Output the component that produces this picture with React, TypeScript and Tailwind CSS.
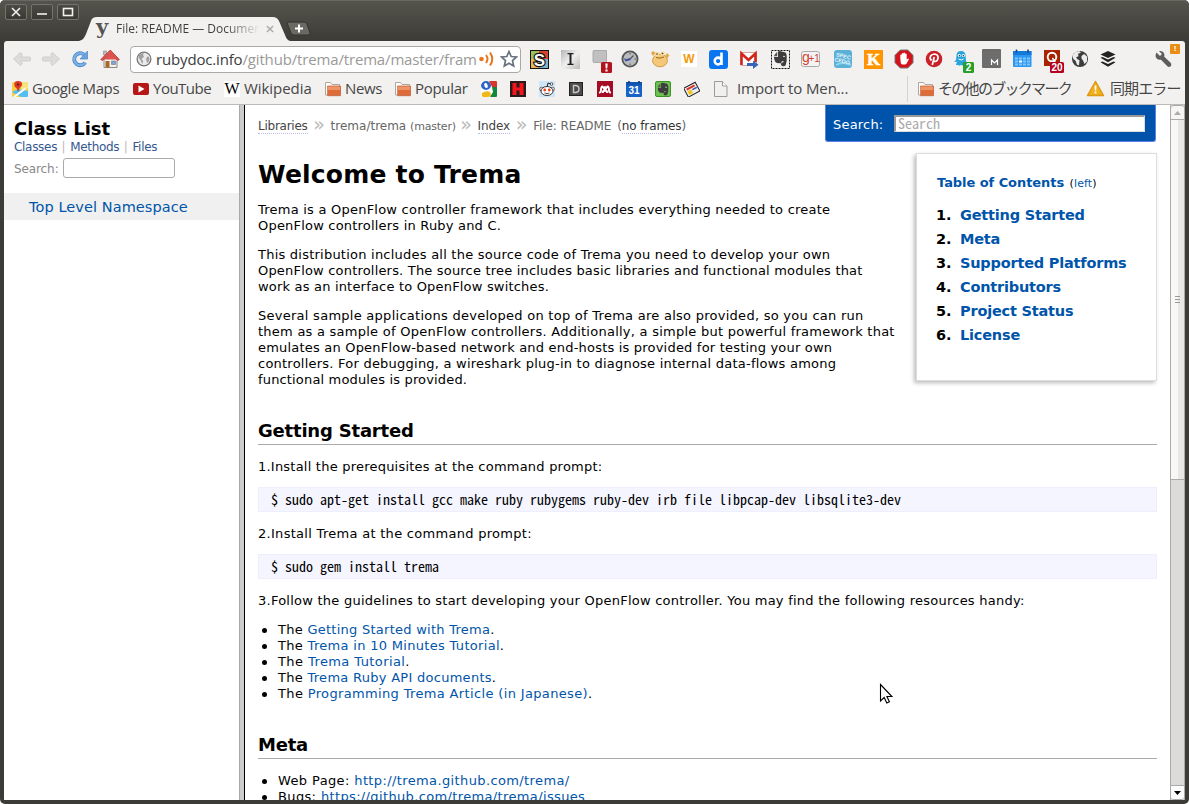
import React from "react";

const UI = "font-['Open_Sans','Noto_Sans','Noto_Sans_CJK_JP',sans-serif]";
const MONO = "font-['Noto_Sans_Mono_CJK_JP','DejaVu_Sans_Mono',monospace]";

function WinButton({ children }: { children: React.ReactNode }) {
  return (
    <div className="flex h-4 w-[22px] items-center justify-center rounded-[2px] border border-[#74736c] bg-linear-to-b from-[#4b4a44] to-[#3a3934]">
      <svg width="12" height="12" viewBox="0 0 12 12" fill="none" stroke="#f2f1ee" strokeWidth="1.6">
        {children}
      </svg>
    </div>
  );
}

function TitleBar() {
  return (
    <div className="flex h-[41px] rounded-t-[5px] border-t border-[#686760] bg-linear-to-b from-[#55544c] to-[#3c3b37] pl-[5px]">
      <div className="flex gap-1 pt-[3px]">
        <WinButton><path d="M2 2l8 8M10 2l-8 8" /></WinButton>
        <WinButton><path d="M1 8h10" /></WinButton>
        <WinButton><rect x="1.5" y="2.5" width="9" height="7" /></WinButton>
      </div>
      <div className="relative mt-4 h-6 w-[208px]">
        <svg className="absolute top-0 left-0" width="212" height="24" viewBox="0 0 212 24">
          <path d="M0 24 C4 23 5 21 7 17 L12 4 Q13 0 18 0 H194 Q198 0 200 4 L206 18 Q208 24 212 24 Z" fill="#f2f1f0" />
        </svg>
        <div className={`absolute inset-0 flex items-center pl-[17px] text-[12px] text-[#3c3c3c] ${UI}`}>
          <span className="w-[20px] pb-[5px] font-['DejaVu_Serif',serif] text-[21px] leading-5 font-bold text-[#555]">y</span>
          <span className="w-[144px] overflow-hidden bg-linear-to-r from-[#3c3c3c] from-75% to-[#f2f1f0] bg-clip-text whitespace-nowrap text-transparent">
            File: README — Documentation
          </span>
          <svg className="ml-[6px]" width="8" height="8" viewBox="0 0 9 9" stroke="#aaa9a6" strokeWidth="1.6"><path d="M1 1l7 7M8 1l-7 7" /></svg>
        </div>
      </div>
      <svg className="mt-[20px] -ml-[1px]" width="26" height="16" viewBox="0 0 26 16">
        <path d="M1 2Q1 1 3 1H18Q20 1 21 3L24 12Q25 14 22 14H8Q6 14 5 12Z" fill="#6a6963" stroke="#33322e" />
        <path d="M13 3.5v8M9 7.5h8" stroke="#fff" strokeWidth="2" />
      </svg>
    </div>
  );
}

const svgText = "font-['Liberation_Sans',sans-serif]";

function Ext({ className = "", children }: { className?: string; children: React.ReactNode }) {
  return (
    <svg className={`shrink-0 ${className}`} width="24" height="28" viewBox="0 0 24 28">
      {children}
    </svg>
  );
}

function Elephant() {
  return (
    <>
      <path d="M5.800 11.200h3.400V6.800q-1.800 1.800-3.400 4.400z" fill="#555" />
      <path d="M6 12h4V6.500q2-.8 3.500 0l3.200.7q1.700.3 2 3.800.4 5.500-1 9-.7 1.500-2.700 1.300-2.200-.2-2.100-2.300.2-1.800 2.600-1.700v-1.300q-1.200-.2-1.800.6l-.8 1.700q-4.500.2-5.700-1.500Q6 14.500 6 12z" fill="#3d3d3d" />
      <path d="M15 11.500q1.200-.8 2 .5" stroke="#ddd" fill="none" />
    </>
  );
}

function Extensions() {
  return (
    <div className="flex items-center">
      <Ext>
        <rect x="3" y="5" width="19" height="19" fill="#111" />
        <path d="M4 6h8v8H4z" fill="#9bbf5c" /><path d="M12 6h9v8h-9z" fill="#d8432e" />
        <path d="M4 14h8v9H4z" fill="#e7b653" /><path d="M12 14h9v9h-9z" fill="#7fb4cf" />
        <text x="12.500" y="20.500" textAnchor="middle" className={svgText} fontSize="17" fontWeight="bold" fill="#fff" stroke="#111" strokeWidth="2.4" paintOrder="stroke">S</text>
      </Ext>
      <Ext className="ml-[7px]">
        <defs><linearGradient id="ins" x1="0" y1="0" x2="1" y2="1"><stop stopColor="#b5b5b5" /><stop offset=".5" stopColor="#f0f0f0" /><stop offset="1" stopColor="#bbb" /></linearGradient></defs>
        <rect x="3" y="5" width="19" height="19" fill="url(#ins)" />
        <path d="M9.500 8h6v1.200h-2v9.600h2V20h-6v-1.200h2V9.200h-2z" fill="#222" />
      </Ext>
      <Ext className="ml-[7px]">
        <path d="M5 5.500h12.500v12h-1v3l-4-3H5q-1 0-1-1v-10q0-1 1-1z" fill="#c0c0c0" stroke="#a0a0a0" strokeWidth=".8" />
        <rect x="12" y="17" width="11" height="11" rx="1.500" fill="#b3121f" />
        <path d="M16.3 18.500h2.400l-.4 5h-1.600zM16.400 24.500h2.200v2h-2.200z" fill="#fff" />
      </Ext>
      <Ext className="ml-[5px]">
        <circle cx="12" cy="14" r="7.600" fill="#b9bcbe" stroke="#555" strokeWidth="1.800" />
        <path d="M12 8v1.500M12 18.500v1.500M6 14h1.500M16.500 14h1.500" stroke="#555" />
        <path d="M12 14l3.500-3.500" stroke="#555" strokeWidth="1.200" /><path d="M12.500 14l-5.500 1.500" stroke="#3c51a3" strokeWidth="2" />
      </Ext>
      <Ext className="ml-[6px]">
        <ellipse cx="12" cy="15.500" rx="7.500" ry="6.300" fill="#f3c878" stroke="#c98f33" strokeWidth=".8" />
        <path d="M3 8l2-2 3 2-3 3zM17 11l2-3 2.500 2.500-2.500 3z" fill="#e5a94b" />
        <circle cx="9" cy="9" r="2.200" fill="#f8dca0" /><circle cx="14.500" cy="8.500" r="2.200" fill="#f8dca0" />
        <circle cx="9" cy="9" r=".8" fill="#432" /><circle cx="14.500" cy="8.500" r=".8" fill="#432" />
        <path d="M8 12.500q4 1.500 8-.5" stroke="#a06a20" fill="none" />
      </Ext>
      <Ext className="ml-[5px]">
        <rect x="4" y="6" width="16" height="16" fill="#fff" />
        <text x="12" y="18" textAnchor="middle" className={svgText} fontSize="12" fontWeight="bold" fill="#f39a0b">W</text>
      </Ext>
      <Ext className="ml-[5px]">
        <rect x="3" y="5" width="19" height="19" rx="3" fill="#0b74ef" />
        <path d="M15.500 7.500v12.500M15.500 16a3.400 3.400 0 1 1-6.800 0a3.400 3.400 0 1 1 6.800 0" stroke="#fff" strokeWidth="2.600" fill="none" />
      </Ext>
      <Ext className="ml-[7px]">
        <rect x="3.500" y="7.500" width="16" height="13" rx="1" fill="#fff" stroke="#d3a5a2" />
        <path d="M4.500 20V8.500l7 6.500 7-6.500V17" fill="none" stroke="#d2261b" strokeWidth="2.600" />
        <path d="M10 18h6v-2.500l5.500 4.300-5.500 4.200v-3h-6z" fill="#3864b8" />
      </Ext>
      <Ext className="ml-[7px]">
        <rect x="3.500" y="5.500" width="18" height="18" fill="none" stroke="#111" strokeDasharray="2 1" />
        <Elephant />
      </Ext>
      <Ext className="ml-[7px]">
        <rect x="2.500" y="6.500" width="18" height="15" rx="2" fill="#f3f3f3" stroke="#aaa" />
        <text x="3" y="17" className={svgText} fontSize="14" fill="#d4402f">g</text>
        <text x="9.500" y="17" className={svgText} fontSize="10" fill="#d4402f">+1</text>
      </Ext>
      <Ext className="ml-[8px]">
        <rect x="3" y="5" width="18" height="18" rx="3" fill="#5ab0d6" />
        <path d="M5 20Q12 16 20 20" stroke="#8ed4ee" strokeWidth="2" fill="none" />
        <g transform="rotate(14 12 13)">
          <text x="12" y="13" textAnchor="middle" className={svgText} fontSize="5.500" fontWeight="bold" fill="#e4f5fb">SPEC</text>
          <text x="12" y="18" textAnchor="middle" className={svgText} fontSize="5.500" fontWeight="bold" fill="#e4f5fb">CFDO</text>
        </g>
      </Ext>
      <Ext className="ml-[6px]">
        <rect x="3" y="5" width="19" height="19" fill="#ff9500" />
        <text x="12.500" y="20" textAnchor="middle" className="font-['Liberation_Serif',serif]" fontSize="17" fontWeight="bold" fill="#fff" stroke="#fff" strokeWidth=".5">K</text>
      </Ext>
      <Ext className="ml-[7px]">
        <path d="M8.300 5h7.400l5.300 5.300v7.400L15.700 23H8.300L3 17.700v-7.400z" fill="#d3121a" stroke="#777" />
        <path d="M8.300 13.500V9.800q.8-.8 1.500 0v2.700V8.500q.8-.8 1.600 0v3.700V8q.9-.8 1.700 0v4.500V9q.8-.8 1.600 0v5.500l1.500-1q1 0 .6.900l-2.300 4.300q-.5.800-1.500.8h-2.200q-1.500 0-2-1.500z" fill="#fff" />
      </Ext>
      <Ext className="ml-[6px]">
        <circle cx="12" cy="14" r="8.300" fill="#cb2027" />
        <path d="M9.500 15.500q-2-1.800-1-4.300 1.200-2.200 4-2.200 3.500.3 3.600 3.300-.2 3.800-2.800 4.200-1.300 0-1.600-1M12.200 12l-1.900 8" stroke="#fff" strokeWidth="1.700" fill="none" />
      </Ext>
      <Ext className="ml-[4px]">
        <path d="M4 17l2-2 .5-5q.5-4 4.500-4t4.500 4l.5 6 1.500 4q-2 1-3.500-.5-1.500 2-3 .2-1.800 1.800-3 0-1 .5-2 0l1-3z" fill="#29a3dc" />
        <circle cx="9.300" cy="10.500" r="1.600" fill="#fff" /><circle cx="13.300" cy="10.500" r="1.600" fill="#fff" />
        <circle cx="9.500" cy="10.800" r=".8" fill="#135" /><circle cx="13.300" cy="10.800" r=".8" fill="#135" />
        <path d="M8.500 14q3 2 5 0" stroke="#fff" fill="none" />
        <rect x="13" y="17" width="11" height="11" rx="1.500" fill="#279f2a" />
        <text x="18.500" y="26" textAnchor="middle" className={svgText} fontSize="10" fontWeight="bold" fill="#fff">2</text>
      </Ext>
      <Ext className="ml-[6px]">
        <rect x="2" y="4" width="19" height="19" rx="1" fill="#6b6b6b" />
        <path d="M2 8h19M2 11h19M2 14h19M2 17h19M2 20h19" stroke="#777" strokeWidth=".7" />
        <path d="M11.500 20v-5l3 3 3-3v5" stroke="#fff" strokeWidth="1.200" fill="none" />
      </Ext>
      <Ext className="ml-[6px]">
        <rect x="3" y="6" width="18.500" height="16" rx="1" fill="#2b97f0" />
        <path d="M3 6h18.500v4H3z" fill="#1479d8" />
        <path d="M6.500 4.500v3M18 4.500v3" stroke="#164a87" strokeWidth="1.600" />
        <path d="M5 12.500h3v2H5zM9 12.500h3v2H9zM13 12.500h3v2h-3zM17 12.500h3v2h-3zM5 15.500h3v2H5zM13 15.500h3v2h-3zM17 15.500h3v2h-3zM5 18.500h3v2H5zM9 18.500h3v2H9zM13 18.500h3v2h-3zM17 18.500h3v2h-3z" fill="#7fc4fb" />
        <path d="M9 15.500h3v2H9z" fill="#fff" />
      </Ext>
      <Ext className="ml-[6px]">
        <rect x="4" y="5" width="16" height="16" fill="#a82400" />
        <circle cx="12" cy="12" r="4.300" stroke="#fff" strokeWidth="1.900" fill="none" />
        <path d="M12 13.500q2 0 3 4" stroke="#fff" strokeWidth="1.600" fill="none" />
        <rect x="10" y="17" width="14" height="11" rx="1.500" fill="#b6001f" />
        <text x="17" y="26" textAnchor="middle" className={svgText} fontSize="10" fontWeight="bold" fill="#fff">20</text>
      </Ext>
      <Ext className="ml-[4px]">
        <circle cx="12" cy="14" r="8" fill="#3c3c3c" />
        <path d="M4.500 11q2-5 7-4.700l1.500 1.500-3 1 .5 2.500-2.500 1 1.500 2 2 1-.5 5-2-.5-1.500-4Q4.500 14 4.500 11zM13.500 11l2.500-2 3 2.500v5l-2.500 2.500-1.500-3.500-1.500-2z" fill="#ececec" />
      </Ext>
      <Ext className="ml-[4px]">
        <path d="M12 6l7.500 3.500L12 13 4.500 9.500z" fill="#222" />
        <path d="M4.500 12.800l2-.8L12 14.600l5.500-2.600 2 .8L12 17.200zM4.500 17.200l2-.8L12 19l5.500-2.600 2 .8L12 21.700z" fill="#222" />
      </Ext>
      <div className="relative ml-[31px] h-7 w-7">
        <svg className="absolute top-[5px] left-[3px]" width="18" height="18" viewBox="0 0 18 18">
          <path d="M2.500 2.600L6 6l2-2L5 1.200Q9 .5 10.300 4q.3 1.500-.2 2.500l6.500 6.300q1.500 2.200-.2 3.700-1.800 1-3.300-.5L7 9.700Q3.500 10.500 1.800 7.300 1.200 4.500 2.500 2.600z" fill="#5d5d5b" />
        </svg>
        <div className={`absolute top-[-1px] left-[19px] flex h-[10px] w-[10px] items-center justify-center rounded-[1px] bg-[#ea8e14] text-[8px] font-bold text-white ${svgText}`}>!</div>
      </div>
    </div>
  );
}

function Arrow({ flip = false }: { flip?: boolean }) {
  return (
    <svg width="20" height="18" viewBox="0 0 20 18" className={flip ? "-scale-x-100" : ""}>
      <path d="M1.500 9L8.500 2.500L10.500 4.500L8.500 7h9q1 0 1 1v2q0 1-1 1h-9l2 2.500-2 2z" fill="#dddcda" stroke="#cfcecb" strokeLinejoin="round" />
    </svg>
  );
}

function Toolbar() {
  return (
    <div className="flex h-9 items-center bg-[#f2f1f0]">
      <div className="flex w-[126px] items-center pl-2">
        <Arrow />
        <span className="w-[9px]" />
        <Arrow flip />
        <svg className="ml-[10px]" width="18" height="18" viewBox="0 0 18 18">
          <path d="M14.200 12.500A6 6 0 1 1 13 4.600" fill="none" stroke="#4b86c6" strokeWidth="3.800" />
          <path d="M14.200 12.500A6 6 0 1 1 13 4.600" fill="none" stroke="#7db2e6" strokeWidth="2.200" />
          <path d="M16.500 1v8H9z" fill="#6ba4dd" stroke="#4b86c6" strokeWidth=".7" />
        </svg>
        <svg className="ml-[11px]" width="20" height="20" viewBox="0 0 20 20">
          <path d="M4 9h13v9.500H4z" fill="#f4f1ea" stroke="#8f8b84" />
          <path d="M3.500 2h3v4h-3z" fill="#bbb" stroke="#888" strokeWidth=".6" />
          <path d="M.8 10.500L10.300 1l9 9.500-1.500 1L10.300 5l-8 6.500z" fill="#dd5452" stroke="#b3302f" strokeWidth=".8" />
          <path d="M10.300 4.500l6.500 6H4z" fill="#dd5452" />
          <path d="M5.500 12h4v6.500h-4z" fill="#a5672a" /><path d="M11.500 12h4v3.500h-4z" fill="#7da7d8" stroke="#667" strokeWidth=".5" />
        </svg>
      </div>
      <div className="flex h-[27px] w-[391px] items-center rounded-[4px] border border-[#aaa8a5] bg-white pl-[5px]">
        <svg width="16" height="16" viewBox="0 0 16 16">
          <circle cx="8" cy="8" r="6.900" fill="#e9e9e9" stroke="#777" strokeWidth="1.300" />
          <path d="M3 4Q5.500 1.800 8 2.200L7 4l1 1.500L5.500 8l1.500 2-.5 3Q5 11 4.500 9L2.500 7zM10 7.500l2-2.500 1.500 2.500-.5 3-2 1.500z" fill="#a0a0a0" />
        </svg>
        <span className={`ml-[4px] w-[321px] text-[15px] tracking-[-0.16px] whitespace-nowrap text-[#3c3c3c] ${UI}`}>
          rubydoc.info<span className="text-[#9a9997]">/github/trema/trema/master/fram</span>
        </span>
        <svg className="ml-[2px]" width="17" height="18" viewBox="0 0 17 18" fill="none" stroke="#e8761c" strokeWidth="2">
          <circle cx="2.500" cy="9" r="2.300" fill="#e8761c" stroke="none" />
          <path d="M7 5q3 4 0 8M11 2.500q4.500 6.500 0 13" />
        </svg>
        <svg className="ml-[4px]" width="18" height="18" viewBox="0 0 18 18">
          <path d="M9 1.500l2.200 5 5.300.5-4 3.600 1.200 5.400L9 13.200 4.300 16l1.200-5.400-4-3.600 5.300-.5z" fill="#fff" stroke="#69727f" strokeWidth="1.700" />
        </svg>
      </div>
      <div className="ml-[6px]"><Extensions /></div>
    </div>
  );
}

function Folder() {
  return (
    <svg width="16" height="16" viewBox="0 0 16 16">
      <path d="M.5 14V1.500h5l1.500 2h7.500V14z" fill="#fff" stroke="#b0a69d" />
      <path d="M3 5h12.500v9.500H3z" fill="#dd6c39" /><path d="M3 5h12.500v4H3z" fill="#ee9468" />
      <path d="M2.500 5h13v9.700h-13z" fill="none" stroke="#c0562a" strokeWidth=".7" />
    </svg>
  );
}

function Bookmarks() {
  return (
    <div className={`flex h-[28px] items-center border-b border-[#bcbab7] bg-[#f2f1f0] pb-[4px] text-[15px] whitespace-nowrap text-[#464646] ${UI}`}>
      <svg className="ml-2" width="16" height="16" viewBox="0 0 16 16">
        <rect x="0" y="1" width="16" height="15" rx="1.500" fill="#f8cf3f" />
        <path d="M9 1h6q1 0 1 1v5L9 9z" fill="#f5e37c" /><path d="M0 11l6-3 10 2v4.500q0 1.500-1 1.500H9z" fill="#54bdf2" />
        <path d="M2 16L14 7" stroke="#fff" strokeWidth="2" /><path d="M6 11Q5 7 2.600 5.500 1 0 6 0t4 4.500Q7 7 6 11z" fill="#dd3b2a" /><circle cx="6" cy="3.500" r="1.200" fill="#721" />
      </svg>
      <span className="ml-1 w-[88px] tracking-[-0.38px]">Google Maps</span>
      <svg className="ml-[13px]" width="16" height="12" viewBox="0 0 16 12"><rect width="16" height="12" rx="2" fill="#b81616" /><path d="M5.500 2.500v7l6-3.500z" fill="#fff" /></svg>
      <span className="ml-1 w-[60px] tracking-[-0.5px]">YouTube</span>
      <span className="ml-[11px] flex h-4 w-4 items-center justify-center bg-white font-['Liberation_Serif',serif] text-[16px] text-black">W</span>
      <span className="ml-[4px] w-[69px] tracking-[-0.05px]">Wikipedia</span>
      <span className="ml-[12px]"><Folder /></span>
      <span className="ml-1 w-[37px] tracking-[-0.4px]">News</span>
      <span className="ml-[13px]"><Folder /></span>
      <span className="ml-1 w-[53px] tracking-[-0.3px]">Popular</span>
      <div className="ml-[13px] flex gap-[13px]">
        <svg width="16" height="16" viewBox="0 0 16 16">
          <rect width="16" height="16" fill="#fff" />
          <path d="M8 0h7q1 0 1 1v5H11z" fill="#d8382b" /><path d="M11 6h5v9q0 1-1 1H9l3-5z" fill="#0f8a3c" />
          <ellipse cx="5" cy="4.500" rx="5" ry="4.400" fill="#2f63c8" /><path d="M1 12q4-3 8-1 3 5-3 5H2q-2-1-1-4z" fill="#f0b81c" />
          <ellipse cx="5" cy="4.500" rx="1.700" ry="2.600" fill="#fff" transform="rotate(-20 5 4.500)" />
        </svg>
        <svg width="16" height="16" viewBox="0 0 16 16"><rect width="16" height="16" fill="#2b1a1a" /><path d="M2.500 2h4v4.500h3V2h4v12h-4V9.500h-3V14h-4z" fill="#f5141c" /></svg>
        <svg width="16" height="16" viewBox="0 0 16 16">
          <rect width="16" height="16" fill="#cfe5f8" /><path d="M8 6l1-4 3 1" stroke="#222" fill="none" /><circle cx="12.500" cy="3" r="1.300" fill="#fff" stroke="#222" strokeWidth=".7" />
          <circle cx="2.500" cy="8" r="1.800" fill="#fff" stroke="#333" strokeWidth=".7" /><circle cx="13.500" cy="8" r="1.800" fill="#fff" stroke="#333" strokeWidth=".7" />
          <ellipse cx="8" cy="10" rx="6" ry="4.500" fill="#fff" stroke="#222" strokeWidth=".9" /><circle cx="5.700" cy="9" r="1.400" fill="#f6401a" /><circle cx="10.300" cy="9" r="1.400" fill="#f6401a" /><path d="M5.500 12q2.500 1.300 5 0" stroke="#222" fill="none" strokeWidth=".8" />
        </svg>
        <svg width="16" height="16" viewBox="0 0 16 16"><rect x="1.500" y="1.500" width="13" height="13" fill="#4b4b4b" stroke="#222" /><path d="M5.500 4.500H8q3 .3 3 3.500t-3 3.500H5.500z" fill="none" stroke="#c8c8c8" strokeWidth="1.400" /></svg>
        <svg width="16" height="16" viewBox="0 0 16 16"><rect width="16" height="16" fill="#a50b24" /><circle cx="8" cy="6.500" r="1.500" fill="#fff" /><path d="M2 11.500q2 .2 2-2.200Q4 5.500 5.500 5.500L8 9l2.500-3.500Q12 5.500 12 9.300q0 2.400 2 2.200M5.800 12q0-2.500 2.200-2.500t2.200 2.500" stroke="#fff" strokeWidth="1.900" fill="none" /></svg>
        <svg width="16" height="16" viewBox="0 0 16 16"><rect y="1" width="16" height="15" rx="1" fill="#1762c6" /><path d="M0 1h16v3.500H0z" fill="#1255b0" /><path d="M3 0v2M13 0v2" stroke="#06306b" strokeWidth="1.500" /><text x="8" y="13" textAnchor="middle" className={svgText} fontSize="10" fontWeight="bold" fill="#fff">31</text></svg>
        <svg width="16" height="16" viewBox="0 0 16 16">
          <rect x=".5" y=".5" width="15" height="15" rx="1.500" fill="#6cc04f" stroke="#3c9227" />
          <g transform="translate(-2.200 -3.300) scale(.83)"><Elephant /></g>
        </svg>
        <svg width="16" height="16" viewBox="0 0 16 16"><g transform="rotate(-28 8 8)"><rect x="1" y="3.500" width="13" height="10" fill="#eee" stroke="#222" /><path d="M3 5h9v2H3z" fill="#de2f22" /><path d="M3 8h4v4H3z" fill="#f7c21c" /><path d="M8 8h5v1.500H8z" fill="#364fae" /></g></svg>
        <svg width="16" height="16" viewBox="0 0 16 16"><path d="M1.500.5h8l4.500 4.500v10.500H1.500z" fill="#f0f0ef" stroke="#9b9b9b" /><path d="M9.500.5V5H14" fill="#fff" stroke="#9b9b9b" /></svg>
      </div>
      <span className="ml-2 w-[112px] tracking-[-0.1px]">Import to Men...</span>
      <span className="ml-[58px] h-[26px] w-px bg-[#d5d3d0]" />
      <span className="ml-[10px]"><Folder /></span>
      <span className="ml-[4px] w-[135px] tracking-[-1.7px]">その他のブックマーク</span>
      <svg className="ml-[13px]" width="19" height="17" viewBox="0 0 19 17"><path d="M9.500 1.500l8 14h-16z" fill="#f3b01c" stroke="#dc9a10" strokeWidth="1.500" strokeLinejoin="round" /><path d="M8.500 5.500h2l-.3 5H8.800zM8.600 11.500h1.800v2H8.600z" fill="#fff" /></svg>
      <span className="ml-[5px] tracking-[-0.9px]">同期エラー</span>
    </div>
  );
}

function Sidebar() {
  return (
    <div className="w-[235px] shrink-0 bg-white">
      <div className="pt-[13px] pl-[10px]">
        <div className="h-[21px] text-[18px] leading-[21px] font-bold">Class List</div>
        <div className="flex h-4 text-[12px] leading-4 text-[#35578f]">
          <span className="tracking-[-0.3px]">Classes</span>
          <span className="mx-[4.500px] text-[#bbb]">|</span>
          <span className="tracking-[-0.3px]">Methods</span>
          <span className="mx-[4.500px] text-[#bbb]">|</span>
          <span className="tracking-[-0.3px]">Files</span>
        </div>
        <div className="mt-[3px] flex h-5 items-center text-[12px] text-[#888]">
          <span className="w-[49px] pt-px tracking-[-0.1px]">Search:</span>
          <span className="h-5 w-[112px] rounded-[3px] border border-[#aaa] bg-white" />
        </div>
      </div>
      <div className="mt-[15px] h-[27px] bg-[#f0f0f0] pl-[25px] text-[14.500px] leading-[28px] tracking-[0.08px] text-[#0055a8]">Top Level Namespace</div>
    </div>
  );
}

const link = "text-[#0055aa]";

function H2({ children }: { children: React.ReactNode }) {
  return <h2 className="mt-[31px] h-[26px] border-b border-[#aaa] text-[18px] leading-[23px] font-bold tracking-[-0.2px]">{children}</h2>;
}

function Code({ children }: { children: React.ReactNode }) {
  return (
    <pre className={`my-3 h-[25px] border border-[#eeeeff] bg-[#f5f5ff] pl-3 text-[14px] leading-[22px] ${MONO}`}>
      {children}
    </pre>
  );
}

type Row = { text: string; track: string };

function Lines({ rows }: { rows: Row[] }) {
  return (
    <p className="mb-[13px] whitespace-nowrap">
      {rows.map((r) => (
        <span key={r.text} className={`block ${r.track}`}>{r.text}</span>
      ))}
    </p>
  );
}

const intro: Row[][] = [
  [
    { text: "Trema is a OpenFlow controller framework that includes everything needed to create", track: "tracking-[0.23px]" },
    { text: "OpenFlow controllers in Ruby and C.", track: "tracking-[0.2px]" },
  ],
  [
    { text: "This distribution includes all the source code of Trema you need to develop your own", track: "tracking-[0.23px]" },
    { text: "OpenFlow controllers. The source tree includes basic libraries and functional modules that", track: "tracking-[0.19px]" },
    { text: "work as an interface to OpenFlow switches.", track: "tracking-[0.19px]" },
  ],
  [
    { text: "Several sample applications developed on top of Trema are also provided, so you can run", track: "tracking-[0.265px]" },
    { text: "them as a sample of OpenFlow controllers. Additionally, a simple but powerful framework that", track: "tracking-[0.25px]" },
    { text: "emulates an OpenFlow-based network and end-hosts is provided for testing your own", track: "tracking-[0.2px]" },
    { text: "controllers. For debugging, a wireshark plug-in to diagnose internal data-flows among", track: "tracking-[0.23px]" },
    { text: "functional modules is provided.", track: "tracking-[0.16px]" },
  ],
];

type ItemProps = { pre?: string; label: string; post?: string; track: string };

function Item({ pre = "The", label, post, track }: ItemProps) {
  return (
    <li className={`flex items-center ${track}`}>
      <span className="mr-[11px] ml-[4px] size-[5px] rounded-full bg-black" />
      <span>{pre} <a className={link}>{label}</a>{post}</span>
    </li>
  );
}

function Toc() {
  const items = ["Getting Started", "Meta", "Supported Platforms", "Contributors", "Project Status", "License"];
  return (
    <aside className="mt-[-1px] h-[228px] w-[241px] shrink-0 border border-[#ddd] bg-white pt-[19px] pl-[20px] shadow-[-2px_2px_4px_#bbb]">
      <div className="h-5 leading-5 font-bold tracking-[-0.06px] whitespace-nowrap text-[#0055aa]">
        Table of Contents <span className="ml-[1px] text-[11px] font-normal tracking-[0.1px] text-black">(<span className={link}>left</span>)</span>
      </div>
      <ol className="mt-[10px] text-[14.500px] leading-6 font-bold tracking-[-0.2px]">
        {items.map((t, i) => (
          <li key={t} className="flex"><span className="-ml-px w-[24px]">{i + 1}.</span><a className={link}>{t}</a></li>
        ))}
      </ol>
    </aside>
  );
}

function Sep() {
  return <span className="w-[23px] text-center text-[19px] leading-[12px] text-[#bbb]">»</span>;
}

function Main() {
  return (
    <div className="relative min-w-0 flex-1 overflow-hidden bg-white pr-[13px] pl-[13px] text-[13px] leading-4">
      <div className="flex h-[49px] justify-between">
        <nav className="flex pt-[13px] text-[12px] whitespace-nowrap text-[#666]">
          <span className="h-4 border-b border-dotted border-[#bbe] leading-[16px] tracking-[-0.25px] text-[#444]">Libraries</span>
          <Sep />
          <span className="w-[124px]">trema/trema <span className="text-[11px] tracking-[-0.2px]">(master)</span></span>
          <Sep />
          <span className="h-4 border-b border-dotted border-[#bbe] leading-[16px] tracking-[-0.1px] text-[#444]">Index</span>
          <Sep />
          <span className="w-[84px] tracking-[-0.1px]">File: README</span>
          <span className="tracking-[-0.1px]">(<span className="inline-block h-4 border-b border-dotted border-[#bbe] leading-[16px] text-[#333]">no frames</span>)</span>
        </nav>
        <div className="mr-[1px] flex h-[37px] w-[331px] rounded-b-[3px] border border-t-0 border-[#5c7fe8] bg-[#0053aa] pt-[10px] pl-[7px] text-white">
          <span className="w-[61px] pt-px leading-[18px] tracking-[0.2px]">Search:</span>
          <span className={`h-[17px] w-[251px] border-t-2 border-r border-b border-l-2 border-[#ddd] border-t-[#999] border-l-[#999] bg-white pl-[2px] text-[14px] leading-[12px] text-[#a9a9a9] ${MONO}`}>Search</span>
        </div>
      </div>
      <div className="flex justify-between">
        <div className="w-[640px]">
          <h1 className="mt-[5px] mb-[12px] h-[31px] text-[25px] leading-[31px] font-bold tracking-[0.2px]">Welcome to Trema</h1>
          {intro.map((rows) => (
            <Lines key={rows[0].text} rows={rows} />
          ))}
        </div>
        <Toc />
      </div>
      <div className="-mt-[13px]">
        <H2>Getting Started</H2>
        <p className="mt-[14px] tracking-[0.22px]">1.Install the prerequisites at the command prompt:</p>
        <Code>$ sudo apt-get install gcc make ruby rubygems ruby-dev irb file libpcap-dev libsqlite3-dev</Code>
        <p className="mt-[14px] tracking-[0.29px]">2.Install Trema at the command prompt:</p>
        <Code>$ sudo gem install trema</Code>
        <p className="mt-[14px] tracking-[0.245px]">3.Follow the guidelines to start developing your OpenFlow controller. You may find the following resources handy:</p>
        <ul className="mt-[13px]">
          <Item label="Getting Started with Trema" post="." track="tracking-[0.26px]" />
          <Item label="Trema in 10 Minutes Tutorial" post="." track="tracking-[0.31px]" />
          <Item label="Trema Tutorial" post="." track="tracking-[0.41px]" />
          <Item label="Trema Ruby API documents" post="." track="tracking-[0.28px]" />
          <Item label="Programming Trema Article (in Japanese)" post="." track="tracking-[0.35px]" />
        </ul>
        <H2>Meta</H2>
        <ul className="mt-[14px]">
          <Item pre="Web Page:" label="http://trema.github.com/trema/" track="tracking-[0.38px]" />
          <Item pre="Bugs:" label="https://github.com/trema/trema/issues" track="tracking-[0.36px]" />
        </ul>
      </div>
      <svg className="absolute top-[578px] left-[634px]" width="15" height="23" viewBox="0 0 15 23">
        <path d="M1.500 1.500v16.500l3.700-3.500 2.600 5.500 2.600-1.200-2.500-5.300h5z" fill="#fff" stroke="#000" strokeWidth="1.100" />
      </svg>
    </div>
  );
}

function Scrollbar() {
  return (
    <div className="flex w-[15px] shrink-0 flex-col border-r border-l border-[#aaa] bg-[#dcdbda]">
      <div className="flex h-[15px] items-center justify-center rounded-t-[3px] border-t border-b border-[#aaa] bg-[#f6f5f4]">
        <svg width="7" height="4" viewBox="0 0 7 4"><path d="M0 4l3.500-4L7 4z" fill="#aaa" /></svg>
      </div>
      <div className="flex h-[360px] flex-col items-center justify-center gap-[2px] border-b border-[#aaa] bg-linear-to-r from-[#f8f7f6] from-50% to-[#e9e7e5] to-50%">
        <span className="h-px w-[5px] bg-[#999]" /><span className="h-px w-[5px] bg-[#999]" /><span className="h-px w-[5px] bg-[#999]" />
      </div>
      <div className="flex-1" />
      <div className="flex h-[15px] items-center justify-center rounded-b-[3px] border-t border-b border-[#aaa] bg-[#fcfcfc]">
        <svg width="7" height="4" viewBox="0 0 7 4"><path d="M0 0h7L3.500 4z" fill="#000" /></svg>
      </div>
    </div>
  );
}

export default function App() {
  return (
    <div className="h-[804px] w-[1189px] overflow-hidden bg-white font-['DejaVu_Sans',sans-serif] text-black">
      <div className="flex h-full flex-col rounded-[5px] bg-[#3c3b37]">
        <TitleBar />
        <div className="mx-1 overflow-hidden rounded-t-[3px]">
          <Toolbar />
          <Bookmarks />
        </div>
        <div className="mx-1 flex h-[695px] overflow-hidden">
          <Sidebar />
          <div className="w-[6px] shrink-0 border-r border-l border-r-black border-l-[#aaa] bg-[#ccc]" />
          <Main />
          <Scrollbar />
        </div>
      </div>
    </div>
  );
}
